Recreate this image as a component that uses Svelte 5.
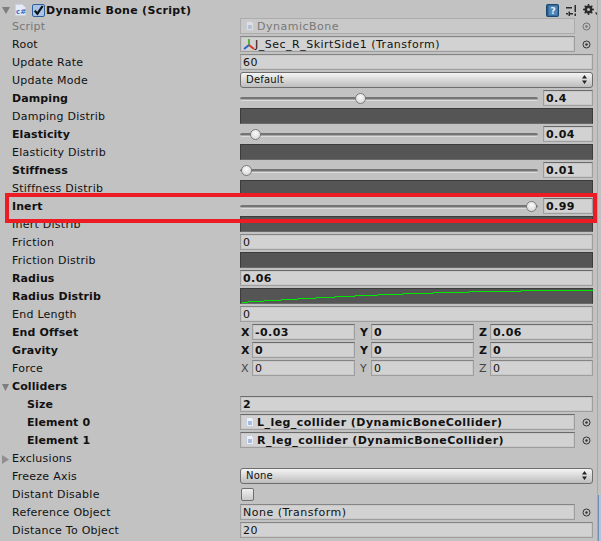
<script>
  const curveSteps = [1, 7, 23, 40, 57, 75, 94, 114, 137, 162, 192, 228, 280, 352]

  // stepped green line of the Radius Distrib curve
  const curvePoints = curveSteps
    .flatMap((x, i) => {
      const y = 13.5 - i
      return i === 0 ? [`${x},${y}`] : [`${x},${y + 1}`, `${x},${y}`]
    })
    .join(' ')

  const rows = [
    { label: 'Script', kind: 'object', value: 'DynamicBone', icon: 'script', disabled: true },
    { label: 'Root', kind: 'object', value: 'J_Sec_R_SkirtSide1 (Transform)', icon: 'transform' },
    { label: 'Update Rate', kind: 'text', value: '60' },
    { label: 'Update Mode', kind: 'select', value: 'Default' },
    { label: 'Damping', kind: 'slider', value: 0.4, bold: true },
    { label: 'Damping Distrib', kind: 'curve' },
    { label: 'Elasticity', kind: 'slider', value: 0.04, bold: true },
    { label: 'Elasticity Distrib', kind: 'curve' },
    { label: 'Stiffness', kind: 'slider', value: 0.01, bold: true },
    { label: 'Stiffness Distrib', kind: 'curve' },
    { label: 'Inert', kind: 'slider', value: 0.99, bold: true },
    { label: 'Inert Distrib', kind: 'curve' },
    { label: 'Friction', kind: 'text', value: '0' },
    { label: 'Friction Distrib', kind: 'curve' },
    { label: 'Radius', kind: 'text', value: '0.06', bold: true },
    { label: 'Radius Distrib', kind: 'curve', bold: true, line: true },
    { label: 'End Length', kind: 'text', value: '0' },
    { label: 'End Offset', kind: 'vector', value: ['-0.03', '0', '0.06'], bold: true },
    { label: 'Gravity', kind: 'vector', value: ['0', '0', '0'], bold: true },
    { label: 'Force', kind: 'vector', value: ['0', '0', '0'] },
    { label: 'Colliders', kind: 'foldout', open: true, bold: true },
    { label: 'Size', kind: 'text', value: '2', bold: true, indent: true },
    { label: 'Element 0', kind: 'object', value: 'L_leg_collider (DynamicBoneCollider)', icon: 'script', bold: true, indent: true },
    { label: 'Element 1', kind: 'object', value: 'R_leg_collider (DynamicBoneCollider)', icon: 'script', bold: true, indent: true },
    { label: 'Exclusions', kind: 'foldout', open: false },
    { label: 'Freeze Axis', kind: 'select', value: 'None' },
    { label: 'Distant Disable', kind: 'check' },
    { label: 'Reference Object', kind: 'object', value: 'None (Transform)' },
    { label: 'Distance To Object', kind: 'text', value: '20' }
  ]

  const axes = ['X', 'Y', 'Z']

  function thumbLeft(v) {
    return 4 + v * 290
  }
</script>

<div class="inspector">
  <div class="header">
    <svg class="fold" width="8" height="7" viewBox="0 0 8 7"><path d="M0 0h8L4 7z" fill="#7e7e7e"/></svg>
    <svg class="cs" width="11" height="12" viewBox="0 0 11 12">
      <path d="M.5.5h7l3 3v8H.5z" fill="#e4ebf6" stroke="#ccd2dc"/>
      <text x="1" y="9.500" class="cs-text">c#</text>
    </svg>
    <span class="enable">
      <svg width="13" height="13" viewBox="0 0 13 13">
        <rect x=".5" y=".5" width="12" height="12" rx="1.500" fill="#a9c3e6" stroke="#2f5f9a"/>
        <path d="M2.800 6.600l2.600 3L10.600 2" fill="none" stroke="#0c1017" stroke-width="2.200"/>
      </svg>
    </span>
    <span class="title">Dynamic Bone (Script)</span>
    <span class="tools">
      <svg width="13" height="13" viewBox="0 0 13 13">
        <rect x=".5" y=".5" width="12" height="12" rx="1" fill="#24598c" stroke="#1c4870"/>
        <rect x="2.500" y="1.500" width="9" height="10" fill="#4f86b8"/>
        <text x="4.500" y="10" class="help-text">?</text>
      </svg>
      <svg width="11" height="11" viewBox="0 0 11 11" fill="#2b2b2b">
        <path d="M0 2h6v1.500H0zM0 8h2v1.500H0zM4 8h3v1.500H4zM8.500 0H10v7H8.500zM8.500 8.500H10V11H8.500zM2.500 6.500H4V11H2.500z"/>
      </svg>
      <svg class="gear" width="15" height="12" viewBox="0 0 15 12">
        <circle cx="5.500" cy="5.500" r="3" fill="none" stroke="#2b2b2b" stroke-width="2"/>
        <path d="M5.500 0v11M0 5.500h11M1.700 1.700l7.600 7.600M9.300 1.700l-7.600 7.600" stroke="#2b2b2b" stroke-width="1.500"/>
        <circle cx="5.500" cy="5.500" r="1.500" fill="#c2c2c2"/>
        <path d="M12 8.500h3L13.500 11z" fill="#2b2b2b"/>
      </svg>
    </span>
  </div>

  {#each rows as row}
    <div class="row">
      <div class="label" class:bold={row.bold} class:indent={row.indent} class:muted={row.disabled}>
        {#if row.kind === 'foldout'}
          <svg class="arrow" width="8" height="9" viewBox="0 0 8 9">
            {#if row.open}
              <path d="M0 1h7L3.500 8z" fill="#7e7e7e"/>
            {:else}
              <path d="M0 0l7 4.500L0 9z" fill="#8f8f8f"/>
            {/if}
          </svg>
        {/if}
        {row.label}
      </div>

      {#if row.kind === 'object'}
        <div class="picker-wrap">
          <div class="field" class:bold={row.bold} class:muted={row.disabled}>
            {#if row.icon === 'script'}
              <svg class="mini" class:faded={row.disabled} width="8" height="10" viewBox="0 0 8 10">
                <path d="M.5.5h5l2 2v7h-7z" fill="#eef2f8" stroke="#c8cdd6"/>
                <path d="M2 5h4M2 7h4" stroke="#5d86c8"/>
              </svg>
            {:else if row.icon === 'transform'}
              <svg class="axes" width="12" height="12" viewBox="0 0 12 12" fill="none" stroke-width="2">
                <path d="M6 7V1" stroke="#5fae3c"/>
                <path d="M6 7L1 11" stroke="#2f62c4"/>
                <path d="M6 7l5 4" stroke="#d8352c"/>
              </svg>
            {/if}
            {row.value}
          </div>
          <svg class="target" width="9" height="9" viewBox="0 0 9 9" class:faded={row.disabled}>
            <circle cx="4.500" cy="4.500" r="3.500" fill="none" stroke="#333"/>
            <circle cx="4.500" cy="4.500" r="1.200" fill="#333"/>
          </svg>
        </div>
      {:else if row.kind === 'text'}
        <div class="field" class:bold={row.bold}>{row.value}</div>
      {:else if row.kind === 'select'}
        <div class="select">
          {row.value}
          <svg width="5" height="9" viewBox="0 0 5 9" fill="#222"><path d="M2.500 0L5 3.500H0zM2.500 9L0 5.500h5z"/></svg>
        </div>
      {:else if row.kind === 'slider'}
        <div class="slider">
          <div class="track">
            <div class="rail"></div>
            <div class="thumb" style="left:{thumbLeft(row.value)}px"></div>
          </div>
          <div class="field num bold">{row.value}</div>
        </div>
      {:else if row.kind === 'curve'}
        <div class="curve">
          {#if row.line}
            <svg width="353" height="14" viewBox="0 0 353 14">
              <polyline points={curvePoints} fill="none" stroke="#00e600"/>
            </svg>
          {/if}
        </div>
      {:else if row.kind === 'vector'}
        <div class="vector">
          {#each row.value as v, i}
            <div class="axis" class:bold={row.bold}>
              <span class="axis-name" class:dim={!row.bold}>{axes[i]}</span>
              <div class="field">{v}</div>
            </div>
          {/each}
        </div>
      {:else if row.kind === 'check'}
        <div><span class="check"></span></div>
      {/if}
    </div>
  {/each}

  <!-- annotation drawn over the screenshot -->
  <div class="highlight"></div>
  <div class="edge"><div class="edge-blue"></div></div>
</div>

<style>
  :global(body) {
    margin: 0;
    background: #c2c2c2;
  }

  .inspector {
    position: relative;
    width: 601px;
    height: 541px;
    overflow: hidden;
    background: #c2c2c2;
    color: #111;
    font-family: "DejaVu Sans", Verdana, sans-serif;
    font-size: 11px;
  }

  .bold { font-weight: 700; }
  .muted { color: #777; }

  .header {
    height: 17px;
    display: flex;
    align-items: center;
    padding-left: 2px;
    padding-top: 3px;
    box-sizing: border-box;
  }
  .cs { margin-left: 5px; }
  .cs-text { font-size: 7px; font-weight: 700; fill: #3f6fc4; }
  .enable { margin-left: 6px; display: flex; }
  .title { margin-left: 1px; font-weight: 700; letter-spacing: 0.3px; white-space: nowrap; }
  .tools {
    margin-left: auto;
    margin-right: 3px;
    display: flex;
    align-items: center;
    gap: 7px;
  }
  .gear { margin-left: -1px; }
  .help-text { font-size: 9px; font-weight: 700; fill: #e8f0f8; }

  .row {
    height: 18px;
    display: grid;
    grid-template-columns: 240px 353px;
    align-items: center;
  }

  .label {
    padding-left: 12px;
    white-space: nowrap;
    letter-spacing: 0.25px;
    position: relative;
  }
  .label.bold { letter-spacing: 0.1px; }
  .label.indent { padding-left: 27px; }
  .arrow { position: absolute; left: 2px; top: 3px; }

  .field {
    height: 16px;
    box-sizing: border-box;
    display: flex;
    align-items: center;
    gap: 2px;
    padding-left: 2px;
    background: #d2d2d2;
    border: 1px solid #9e9e9e;
    border-top-color: #858585;
    box-shadow: inset 0 0 0 1px #c8c8c8;
    white-space: nowrap;
    overflow: hidden;
    letter-spacing: 0.5px;
    flex: 1;
    min-width: 0;
  }
  .field.bold, .axis.bold .field { border-top-color: #6a6a6a; letter-spacing: 0.45px; }
  .field.muted { background: #c9c9c9; border-color: #acacac; box-shadow: none; }

  .picker-wrap {
    display: flex;
    align-items: center;
  }
  .picker-wrap .field { flex: none; width: 335px; }
  .target { margin-left: 7px; }
  .faded { opacity: 0.55; }
  .mini { margin-left: 3px; margin-right: 1px; }
  .axes { margin-right: -2px; }

  .select {
    height: 16px;
    box-sizing: border-box;
    display: flex;
    align-items: center;
    justify-content: space-between;
    padding: 0 5px 1px 5px;
    border: 1px solid #6e6e6e;
    border-radius: 3px;
    background: linear-gradient(#f4f4f4, #d8d8d8 50%, #bdbdbd);
    font-size: 10px;
    letter-spacing: 0.2px;
  }

  .slider {
    display: flex;
    align-items: center;
    gap: 5px;
  }
  .track {
    position: relative;
    width: 298px;
    height: 16px;
    flex: none;
  }
  .rail {
    position: absolute;
    left: 0;
    right: 0;
    top: 7px;
    height: 4px;
    box-sizing: border-box;
    border-radius: 2px;
    background: #a8a8a8;
    border-top: 2px solid #747474;
    border-bottom: 1px solid #dcdcdc;
  }
  .thumb {
    position: absolute;
    top: 3px;
    width: 11px;
    height: 11px;
    margin-left: -5.5px;
    box-sizing: border-box;
    border-radius: 50%;
    border: 1px solid #7b7b7b;
    background: radial-gradient(circle at 50% 35%, #fafafa, #d0d0d0);
  }
  .num { flex: 1; }

  .curve {
    height: 16px;
    box-sizing: border-box;
    background: #555;
    border: 1px solid #3c3c3c;
    border-bottom-color: #6a6a6a;
  }
  .curve svg { display: block; }

  .vector {
    display: grid;
    grid-template-columns: repeat(3, 1fr);
    column-gap: 4px;
  }
  .axis { display: flex; align-items: center; }
  .axis-name { width: 12px; flex: none; padding-left: 1px; box-sizing: border-box; }
  .axis-name.dim { color: #444; }

  .check {
    display: block;
    width: 13px;
    height: 13px;
    margin-left: 1px;
    box-sizing: border-box;
    border: 1px solid #6e6e6e;
    border-radius: 2px;
    background: linear-gradient(#f0f0f0, #c9c9c9);
  }

  .highlight {
    position: absolute;
    left: 5px;
    top: 193px;
    width: 592px;
    height: 30px;
    box-sizing: border-box;
    border: 4px solid #ed1c24;
  }

  .edge {
    position: absolute;
    right: 0;
    top: 0;
    bottom: 0;
    width: 3px;
    border-left: 1px solid #a9a9a9;
    box-sizing: content-box;
  }
  .edge-blue {
    position: absolute;
    left: 0;
    right: 0;
    top: 495px;
    bottom: 0;
    background: #b5c4d8;
    border-left: 1px solid #6f8db5;
  }
</style>
